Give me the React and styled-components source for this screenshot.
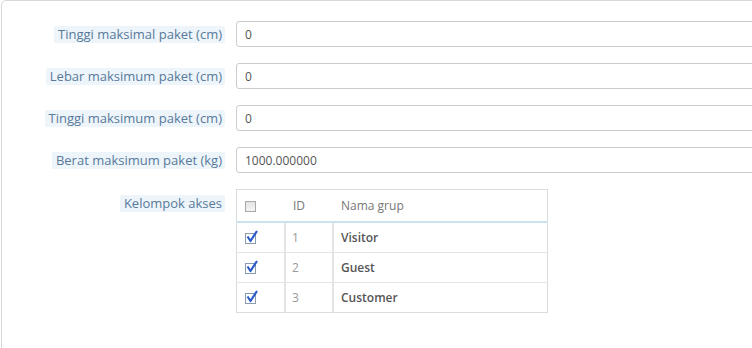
import React from "react";
import styled, { createGlobalStyle } from "styled-components";

const Global = createGlobalStyle`
  html, body { margin: 0; padding: 0; background: #fff; overflow: hidden; }
  body { font-family: "Open Sans", "Liberation Sans", sans-serif; font-size: 12px; color: #555; }
`;

const Panel = styled.div`
  margin: 0 -40px 0 1px;
  height: 380px;
  border: 1px solid #d3d8db;
  border-radius: 5px;
  padding: 20px 0 0 0;
  box-sizing: border-box;
  display: flex;
  flex-direction: column;
  gap: 16px;
`;

const Row = styled.div`
  display: grid;
  grid-template-columns: 223px 1fr;
  column-gap: 11px;
  align-items: ${(p) => (p.$top ? "start" : "center")};
`;

const LabelCell = styled.div`
  display: flex;
  justify-content: flex-end;
  padding-top: ${(p) => (p.$top ? "6px" : "0")};
`;

const Label = styled.span`
  background: #edf5fa;
  color: #58799a;
  font-size: 13px;
  line-height: 17px;
  padding: 0 3px 0 4px;
  border-radius: 2px;
  white-space: nowrap;
`;

const Input = styled.div`
  height: 26px;
  box-sizing: border-box;
  border: 1px solid #c9cdd0;
  border-radius: 3px;
  padding: 0 8px;
  display: flex;
  align-items: center;
  color: #555;
  font-size: 12px;
  background: #fff;
`;

const Table = styled.table`
  border-collapse: collapse;
  width: 312px;
  border: 1px solid #dadde0;
  font-size: 12px;
`;

const Th = styled.th`
  height: 31px;
  text-align: left;
  font-weight: normal;
  color: #777;
  padding: 0 0 0 ${(p) => p.$pl || 8}px;
  border-bottom: 2px solid #cde3ec;
  width: ${(p) => p.$w || "auto"};
`;

const Td = styled.td`
  height: 29px;
  padding: 0 0 0 ${(p) => p.$pl || 8}px;
  border-top: 1px solid #e2e4e6;
  border-left: ${(p) => (p.$first ? "none" : "2px solid #e2e4e6")};
  color: ${(p) => (p.$bold ? "#555" : "#999")};
  font-weight: ${(p) => (p.$bold ? 600 : 400)};
  vertical-align: middle;
`;

const Box = styled.span`
  display: inline-block;
  position: relative;
  width: 11px;
  height: 11px;
  box-sizing: border-box;
  border: 1px solid ${(p) => (p.$checked ? "#8a9bb0" : "#a8a8a8")};
  background: ${(p) => (p.$checked ? "#fff" : "linear-gradient(#e4e4e4, #f4f4f4)")};
  vertical-align: middle;
`;

const Tick = styled.svg`
  position: absolute;
  left: 0px;
  top: -4px;
  width: 12px;
  height: 13px;
  overflow: visible;
`;

function Check({ checked }) {
  return (
    <Box $checked={checked}>
      {checked && (
        <Tick viewBox="0 0 12 13">
          <path d="M1.5 6.5 L4.5 11 L11 1" fill="none" stroke="#2a5bc8" strokeWidth="2.2" strokeLinejoin="round" />
        </Tick>
      )}
    </Box>
  );
}

const fields = [
  ["Tinggi maksimal paket (cm)", "0"],
  ["Lebar maksimum paket (cm)", "0"],
  ["Tinggi maksimum paket (cm)", "0"],
  ["Berat maksimum paket (kg)", "1000.000000"],
];

const groups = [
  [1, "Visitor"],
  [2, "Guest"],
  [3, "Customer"],
];

export default function App() {
  return (
    <>
      <Global />
      <Panel>
        {fields.map(([l, v]) => (
          <Row key={l}>
            <LabelCell>
              <Label>{l}</Label>
            </LabelCell>
            <Input>{v}</Input>
          </Row>
        ))}
        <Row $top>
          <LabelCell $top>
            <Label>Kelompok akses</Label>
          </LabelCell>
          <div>
            <Table>
              <thead>
                <tr>
                  <Th $w="40px" $pl={8}><Check /></Th>
                  <Th $w="40px" $pl={8}>ID</Th>
                  <Th $pl={8}>Nama grup</Th>
                </tr>
              </thead>
              <tbody>
                {groups.map(([id, name]) => (
                  <tr key={id}>
                    <Td $first $pl={8}><Check checked /></Td>
                    <Td $pl={6}>{id}</Td>
                    <Td $bold $pl={7}>{name}</Td>
                  </tr>
                ))}
              </tbody>
            </Table>
          </div>
        </Row>
      </Panel>
    </>
  );
}
